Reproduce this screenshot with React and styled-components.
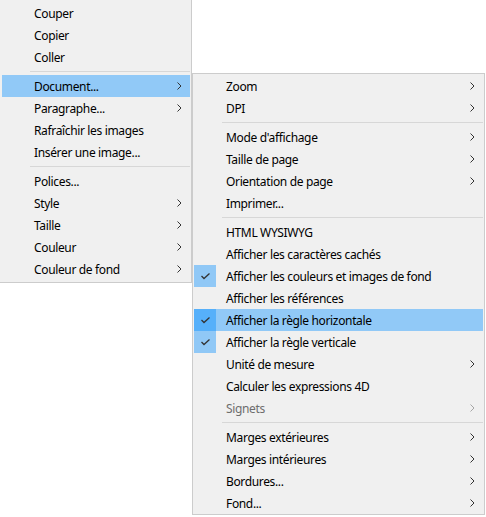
import React from "react";
import styled, { createGlobalStyle } from "styled-components";

const Global = createGlobalStyle`
  html, body { margin: 0; padding: 0; background: #ffffff; }
  body { font-family: "Noto Sans", "Open Sans", sans-serif; }
`;

const Desktop = styled.div`
  position: relative;
  width: 486px;
  height: 517px;
  overflow: hidden;
  background: #ffffff;
`;

const Menu = styled.div`
  display: flex;
  flex-direction: column;
  background: #f0f0f0;
  box-sizing: border-box;
`;

const MainMenu = styled(Menu)`
  width: 192px;
  padding: 2px 1px 2px 2px;
  border-right: 1px solid #cccccc;
  border-bottom: 1px solid #cccccc;
`;

const SubMenu = styled(Menu)`
  position: absolute;
  left: 192px;
  top: 73px;
  width: 293px;
  padding: 1px 1px 0 1px;
  border: 1px solid #cccccc;
`;

const Item = styled.div`
  position: relative;
  display: flex;
  align-items: center;
  height: 22px;
  padding-left: 32px;
  padding-right: 8px;
  font-size: 12px;
  line-height: 22px;
  color: ${(p) => (p.$disabled ? "#6d6d6d" : "#000000")};
  background: ${(p) => (p.$active ? "#91c9f7" : "transparent")};
  white-space: nowrap;
`;

const Label = styled.span`
  flex: 1;
  letter-spacing: -0.35px;
  padding-top: 1px;
`;

const CheckBox = styled.span`
  position: absolute;
  left: 0;
  top: 0;
  width: 22px;
  height: 22px;
  display: flex;
  align-items: center;
  justify-content: center;
  background: ${(p) => (p.$active ? "#56b0fa" : "#90c8f6")};
`;

const Separator = styled.div`
  height: 7px;
  display: flex;
  align-items: center;
  padding-left: 28px;
  &::after {
    content: "";
    flex: 1;
    height: 1px;
    background: #d7d7d7;
  }
`;

const Chevron = ({ disabled }) => (
  <svg width="5" height="8" viewBox="0 0 5 8" style={{ display: "block" }}>
    <polyline
      points="0.5,0.5 4,4 0.5,7.5"
      fill="none"
      stroke={disabled ? "#a6a6a6" : "#333333"}
      strokeWidth="1"
    />
  </svg>
);

const Check = () => (
  <svg width="9" height="7" viewBox="0 0 9 7" style={{ display: "block" }}>
    <polyline points="0.5,3 3,5.5 8.5,0.5" fill="none" stroke="#333333" strokeWidth="1.3" />
  </svg>
);

const main = [
  { label: "Couper" },
  { label: "Copier" },
  { label: "Coller" },
  { sep: true },
  { label: "Document...", sub: true, active: true },
  { label: "Paragraphe...", sub: true },
  { label: "Rafraîchir les images" },
  { label: "Insérer une image..." },
  { sep: true },
  { label: "Polices..." },
  { label: "Style", sub: true },
  { label: "Taille", sub: true },
  { label: "Couleur", sub: true },
  { label: "Couleur de fond", sub: true },
];

const doc = [
  { label: "Zoom", sub: true },
  { label: "DPI", sub: true },
  { sep: true },
  { label: "Mode d'affichage", sub: true },
  { label: "Taille de page", sub: true },
  { label: "Orientation de page", sub: true },
  { label: "Imprimer..." },
  { sep: true },
  { label: "HTML WYSIWYG" },
  { label: "Afficher les caractères cachés" },
  { label: "Afficher les couleurs et images de fond", checked: true },
  { label: "Afficher les références" },
  { label: "Afficher la règle horizontale", checked: true, active: true },
  { label: "Afficher la règle verticale", checked: true },
  { label: "Unité de mesure", sub: true },
  { label: "Calculer les expressions 4D" },
  { label: "Signets", sub: true, disabled: true },
  { sep: true },
  { label: "Marges extérieures", sub: true },
  { label: "Marges intérieures", sub: true },
  { label: "Bordures...", sub: true },
  { label: "Fond...", sub: true },
];

const renderItems = (items) =>
  items.map((it, i) =>
    it.sep ? (
      <Separator key={i} />
    ) : (
      <Item key={i} $active={it.active} $disabled={it.disabled}>
        {it.checked && (
          <CheckBox $active={it.active}>
            <Check />
          </CheckBox>
        )}
        <Label>{it.label}</Label>
        {it.sub && <Chevron disabled={it.disabled} />}
      </Item>
    )
  );

export default function App() {
  return (
    <>
      <Global />
      <Desktop>
        <MainMenu>{renderItems(main)}</MainMenu>
        <SubMenu>{renderItems(doc)}</SubMenu>
      </Desktop>
    </>
  );
}
